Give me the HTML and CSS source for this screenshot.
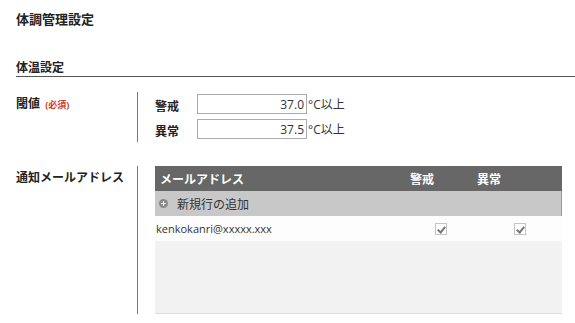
FILE: index.html
```html
<!DOCTYPE html>
<html lang="ja">
<head>
    <meta charset="UTF-8">
    <title>体調管理設定</title>
    <link rel="stylesheet" href="styles.css">
</head>
<body>
    <h1 class="page-title">体調管理設定</h1>

    <h2 class="section-title">体温設定</h2>

    <div class="form-row threshold-row">
        <div class="form-label">閾値 <span class="required">(必須)</span></div>
        <div class="form-body">
            <div class="temp-line">
                <span class="temp-label">警戒</span>
                <input class="temp-input" type="text" value="37.0">
                <span class="unit">°C以上</span>
            </div>
            <div class="temp-line">
                <span class="temp-label">異常</span>
                <input class="temp-input" type="text" value="37.5">
                <span class="unit">°C以上</span>
            </div>
        </div>
    </div>

    <div class="form-row mail-row">
        <div class="form-label">通知メールアドレス</div>
        <div class="form-body">
            <div class="mail-table">
                <div class="mail-head">
                    <div class="col-addr">メールアドレス</div>
                    <div class="col-warn">警戒</div>
                    <div class="col-alert">異常</div>
                </div>
                <div class="mail-add">
                    <span class="add-icon"></span>
                    <span>新規行の追加</span>
                </div>
                <div class="mail-item">
                    <div class="col-addr">kenkokanri@xxxxx.xxx</div>
                    <div class="col-warn"><span class="check"></span></div>
                    <div class="col-alert"><span class="check"></span></div>
                </div>
                <div class="mail-empty"></div>
            </div>
        </div>
    </div>
</body>
</html>
```

FILE: styles.css
```css
body {
    margin: 0;
    padding: 0 0 0 16px;
    font-family: "Open Sans", "Noto Sans CJK JP", sans-serif;
    font-size: 12px;
    color: #333;
    background-color: #fff;
}
.page-title {
    margin: 0;
    padding-top: 10px;
    font-size: 13px;
    line-height: 18px;
    color: #222;
}
.section-title {
    margin: 32px 0 0;
    font-size: 12px;
    line-height: 16px;
    padding-bottom: 0;
    border-bottom: 1px solid #555;
    color: #222;
}
.form-row {
    display: flex;
}
.threshold-row {
    margin-top: 15px;
}
.mail-row {
    margin-top: 24px;
}
.form-label {
    width: 121px;
    padding-top: 4px;
    line-height: 16px;
    font-weight: bold;
    color: #222;
}
.required {
    font-size: 9px;
    color: #d33a2c;
    margin-left: 2px;
}
.form-body {
    border-left: 1px solid #777;
    padding-left: 17px;
}
.threshold-row .form-body {
    padding-top: 2px;
    padding-bottom: 3px;
}
.temp-line {
    display: flex;
    align-items: center;
    height: 20px;
}
.temp-line + .temp-line {
    margin-top: 5px;
}
.temp-label {
    width: 42px;
    padding-top: 4px;
    font-weight: bold;
    color: #222;
}
.temp-input {
    box-sizing: border-box;
    width: 110px;
    height: 20px;
    margin: 0;
    padding: 0 2px;
    border: 1px solid #aaa;
    font-family: inherit;
    font-size: 12px;
    text-align: right;
    color: #333;
}
.unit {
    margin-left: 1px;
    color: #333;
}
.mail-table {
    width: 407px;
}
.mail-head,
.mail-add,
.mail-item {
    display: flex;
    align-items: center;
    height: 25px;
}
.mail-head {
    background-color: #676767;
    color: #fff;
    font-weight: bold;
}
.col-addr,
.col-warn,
.col-alert {
    box-sizing: border-box;
    padding-left: 5px;
}
.col-addr {
    width: 250px;
}
.col-warn {
    width: 67px;
}
.col-alert {
    flex: 1;
}
.mail-item .col-addr {
    padding-left: 1px;
    font-size: 11px;
}
.mail-item .col-warn,
.mail-item .col-alert {
    display: flex;
    justify-content: center;
    padding-left: 0;
}
.mail-item .col-warn {
    width: 72px;
}
.mail-add {
    background-color: #c8c8c8;
    border-right: 1px solid #999;
    padding-left: 4px;
    color: #333;
}
.add-icon {
    position: relative;
    width: 9px;
    height: 9px;
    border-radius: 50%;
    background-color: #8a8a8a;
    margin-right: 9px;
}
.add-icon::before,
.add-icon::after {
    content: "";
    position: absolute;
    background-color: #eee;
}
.add-icon::before {
    left: 2px;
    top: 4px;
    width: 5px;
    height: 1px;
}
.add-icon::after {
    left: 4px;
    top: 2px;
    width: 1px;
    height: 5px;
}
.mail-item {
    background-color: #fdfdfd;
}
.check {
    position: relative;
    box-sizing: border-box;
    width: 12px;
    height: 12px;
    border: 1px solid #c4c4c4;
    background-color: #fff;
}
.check::after {
    content: "";
    position: absolute;
    left: 3px;
    top: 1px;
    width: 3px;
    height: 6px;
    border-right: 2px solid #777;
    border-bottom: 2px solid #777;
    transform: rotate(40deg);
}
.mail-empty {
    height: 72px;
    background-color: #f2f2f2;
    border-bottom: 1px solid #ddd;
}
```
